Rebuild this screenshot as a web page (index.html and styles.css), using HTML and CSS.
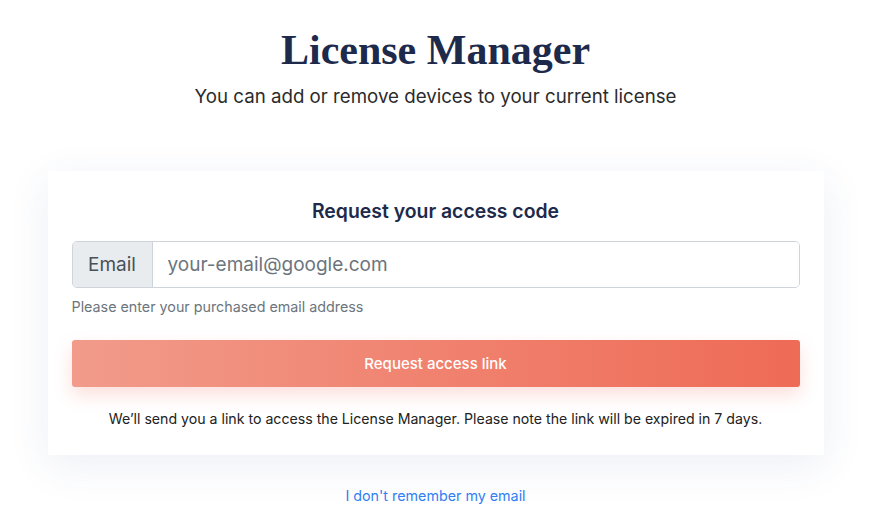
FILE: index.html
```html
<!DOCTYPE html>
<html lang="en">
<head>
  <meta charset="UTF-8">
  <meta name="viewport" content="width=device-width, initial-scale=1.0">
  <title>License Manager</title>
  <link rel="stylesheet" href="styles.css">
</head>
<body>
  <div class="page">
    <header class="intro">
      <h1>License Manager</h1>
      <p class="lead">You can add or remove devices to your current license</p>
    </header>

    <div class="card">
      <h3 class="card-title">Request your access code</h3>
      <div class="input-group">
        <span class="addon">Email</span>
        <input type="email" class="field" placeholder="your-email@google.com">
      </div>
      <p class="help">Please enter your purchased email address</p>
      <button class="btn-request">Request access link</button>
      <p class="note">We’ll send you a link to access the License Manager. Please note the link will be expired in 7 days.</p>
    </div>

    <a class="forgot" href="#">I don't remember my email</a>
  </div>
</body>
</html>
```

FILE: styles.css
```css
body {
  margin: 0;
  padding: 0;
  background: #fff;
  font-family: Inter, "Noto Sans", Arial, sans-serif;
  color: #212529;
}
.page {
  width: 776px;
  margin: 0 auto;
  text-align: center;
}
.intro {
  padding-top: 26px;
}
h1 {
  margin: 0;
  font-family: "Liberation Serif", "Times New Roman", serif;
  font-weight: bold;
  font-size: 42px;
  line-height: 48px;
  color: #1d2a4b;
}
.lead {
  margin: 11px 0 0;
  font-size: 18.7px;
  line-height: 24px;
  color: #2b2b2b;
}
.card {
  margin-top: 62px;
  padding: 28px 24px 26px;
  background: #fff;
  box-shadow: 0 10px 40px rgba(60, 80, 160, 0.09);
}
.card-title {
  margin: 0 0 18px;
  font-size: 19.4px;
  line-height: 24px;
  font-weight: 600;
  color: #1d2a4b;
}
.input-group {
  display: flex;
  height: 47px;
  border: 1px solid #ced4da;
  border-radius: 5px;
  overflow: hidden;
  box-sizing: border-box;
}
.addon {
  display: flex;
  align-items: center;
  width: 80px;
  box-sizing: border-box;
  justify-content: center;
  background: #e9ecef;
  border-right: 1px solid #ced4da;
  font-size: 19px;
  color: #495057;
}
.field {
  flex: 1;
  border: none;
  outline: none;
  padding: 0 15px;
  font-family: inherit;
  font-size: 19px;
  color: #495057;
}
.field::placeholder {
  color: #6c757d;
}
.help {
  margin: 9px 0 0;
  text-align: left;
  font-size: 14.3px;
  line-height: 20px;
  color: #6c757d;
}
.btn-request {
  display: block;
  width: 100%;
  height: 47px;
  margin-top: 23px;
  border: none;
  border-radius: 3px;
  background: linear-gradient(90deg, #f29b8b 0%, #f0826f 50%, #ee6b56 100%);
  box-shadow: 0 8px 18px rgba(240, 110, 90, 0.22);
  color: #fff;
  font-family: inherit;
  font-size: 15px;
  font-weight: 500;
  cursor: pointer;
}
.note {
  margin: 22px 0 0;
  font-size: 14.15px;
  line-height: 20px;
  color: #222;
}
.forgot {
  display: inline-block;
  margin-top: 32px;
  font-size: 14.3px;
  color: #2f7ff5;
  text-decoration: none;
}
```
